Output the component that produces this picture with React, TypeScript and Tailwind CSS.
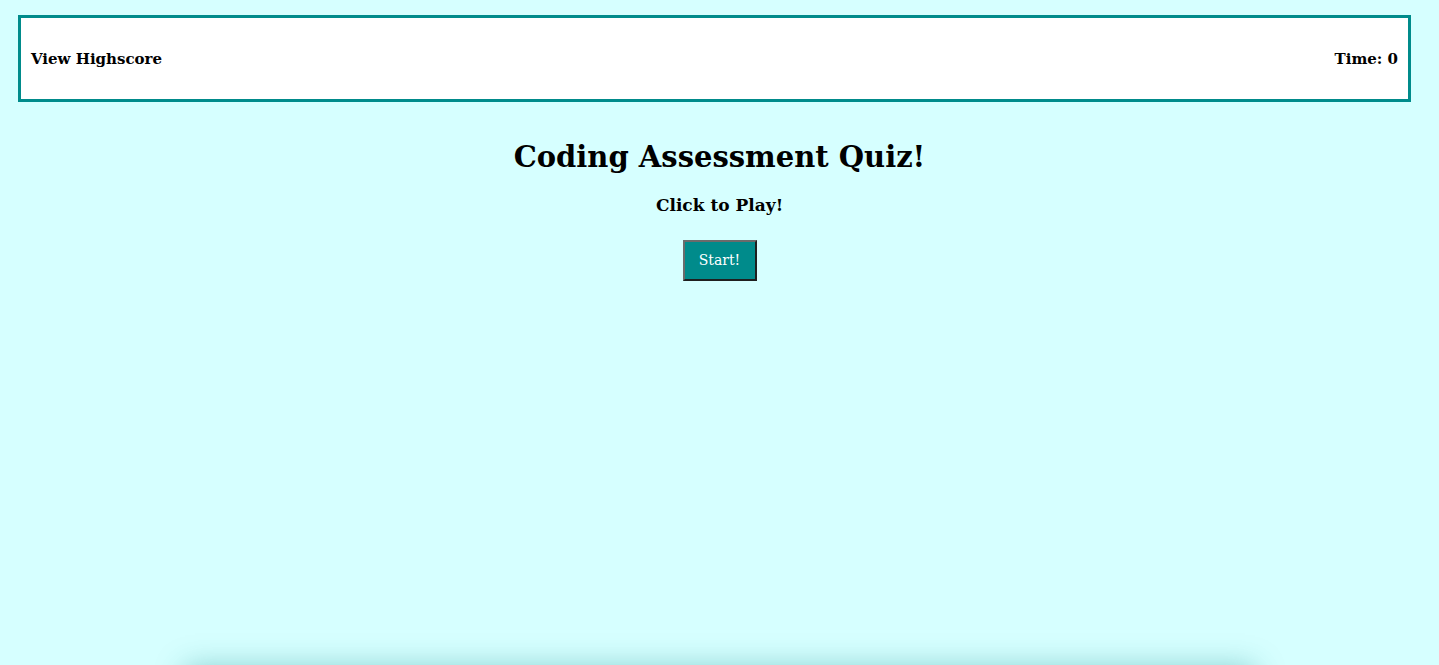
export default function App() {
  return (
    <div className="min-h-screen bg-[#d6ffff] text-black" style={{ fontFamily: '"DejaVu Serif", serif' }}>
      <div className="pt-[15px] pl-[18px] pr-[28px]">
        <header className="flex h-[87px] items-center justify-between border-[3px] border-[#008b8b] bg-white px-[10px]">
          <span className="pt-[2px] text-[15px] font-bold">View Highscore</span>
          <span className="pt-[2px] text-[15px] font-bold">Time: 0</span>
        </header>
      </div>
      <main className="flex flex-col items-center">
        <h1 className="mt-[35px] text-[29px] font-bold leading-[40px]">Coding Assessment Quiz!</h1>
        <h3 className="mt-[15px] text-[17px] font-bold leading-[26px]">Click to Play!</h3>
        <button className="mt-[22px] h-[41px] w-[74px] border-2 border-t-[#6b6b6b] border-l-[#6b6b6b] border-r-[#1f1f1f] border-b-[#1f1f1f] bg-[#008b8b] text-[14px] text-white">
          Start!
        </button>
      </main>
      <div className="mx-auto mt-[386px] h-[200px] w-[1070px] shadow-[0_0_28px_rgba(0,130,130,0.38)]" />
    </div>
  );
}
